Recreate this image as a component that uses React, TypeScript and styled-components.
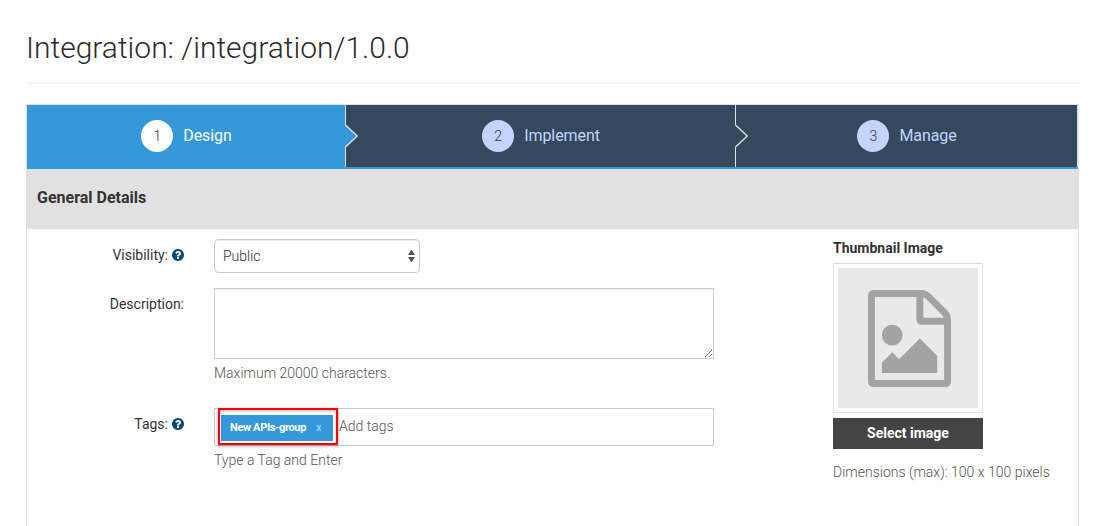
import React from 'react';
import styled, { createGlobalStyle } from 'styled-components';

const GlobalStyle = createGlobalStyle`
  *, *::before, *::after { box-sizing: border-box; }
  body {
    margin: 0;
    background: #fff;
    color: #333;
    font: 300 14px/20px Roboto, "Liberation Sans", sans-serif;
  }
`;

const Page = styled.main`
  height: 526px;
  padding: 0 17px 0 26px;
  display: flex;
  flex-direction: column;
  overflow: hidden;
`;

const Title = styled.h1`
  margin: 0 0 20px;
  height: 84px;
  padding-top: 28px;
  border-bottom: 1px solid #ececec;
  color: #2b2b2b;
  font-size: 30px;
  line-height: 40px;
  font-weight: 300;
  white-space: nowrap;
`;

const Panel = styled.section`
  flex: 1;
  border: 1px solid #e1e1e1;
  border-bottom: 0;
`;

const Steps = styled.nav`
  display: grid;
  grid-template-columns: 319px 390px 342px;
  height: 64px;
`;

const Step = styled.div<{ $active?: boolean }>`
  position: relative;
  display: flex;
  align-items: center;
  justify-content: center;
  gap: 10px;
  padding-bottom: 1px;
  background: ${(p) => (p.$active ? '#3498db' : '#34495e')};
  border-bottom: 2px solid #3498db;
  box-shadow: inset -1px 0 #e1e1e1;
  color: ${(p) => (p.$active ? '#fff' : '#c2d4ff')};
  font-size: 16px;
  font-weight: 400;
  letter-spacing: -0.08px;
`;

const StepNumber = styled.span<{ $active?: boolean }>`
  width: 32px;
  height: 32px;
  border-radius: 50%;
  background: ${(p) => (p.$active ? '#fff' : '#c2d4ff')};
  color: #333;
  font-size: 14px;
  font-weight: 300;
  line-height: 32px;
  text-align: center;
`;

const StepArrow = styled.svg`
  position: absolute;
  z-index: 1;
  top: 18px;
  right: -13px;
  width: 14px;
  height: 26px;
`;

const SectionHeader = styled.h2`
  margin: 0;
  height: 60px;
  padding: 19px 10px;
  background: #e1e1e1;
  font-size: 16px;
  line-height: 20px;
  font-weight: 700;
`;

const Content = styled.div`
  display: flex;
  padding: 10px 0 0 10px;
`;

const Form = styled.div`
  width: 677px;
  margin-right: 119px;
`;

const Field = styled.div<{ $gap?: number }>`
  display: grid;
  grid-template-columns: 147px 500px;
  column-gap: 30px;
  margin-bottom: ${(p) => p.$gap ?? 0}px;
`;

const Label = styled.label`
  display: flex;
  align-items: center;
  justify-content: flex-end;
  gap: 3px;
  height: 20px;
  margin-top: 6px;
  font-weight: 400;
`;

const Help = styled.svg`
  width: 14px;
  height: 14px;
  margin-right: -1px;
  fill: #044a75;
`;

const Select = styled.div`
  display: flex;
  align-items: center;
  justify-content: space-between;
  width: 206px;
  height: 34px;
  padding: 0 4px 0 8px;
  border: 1px solid #ccc;
  border-radius: 4px;
  color: #333;
  box-shadow: inset 0 1px 1px rgba(0, 0, 0, 0.075);
`;

const Arrows = styled.svg`
  width: 7px;
  height: 14px;
  fill: #555;
`;

const TextArea = styled.textarea`
  display: block;
  width: 500px;
  height: 71px;
  border: 1px solid #ccc;
  border-radius: 0;
  background: #fff;
  box-shadow: inset 0 1px 1px rgba(0, 0, 0, 0.075);
  resize: vertical;
  outline: 0;
`;

const Hint = styled.p`
  margin: 4px 0 0;
  color: #555;
`;

const TagInput = styled.div`
  display: flex;
  align-items: center;
  height: 38px;
  padding-left: 3px;
  border: 1px solid #ccc;
  color: #555;
`;

const TagFrame = styled.div`
  flex: none;
  width: 120px;
  height: 37px;
  margin: -1px 1px 0 0;
  align-self: flex-start;
  padding: 5px 3px 0 1px;
  border: 2px solid #f00;
  box-shadow: 0 1px 3px rgba(0, 0, 0, 0.4), inset 0 1px 3px rgba(0, 0, 0, 0.3);
`;

const TagHint = styled.span`
  margin-top: -2px;
`;

const Tag = styled.span`
  display: flex;
  gap: 10px;
  height: 26px;
  padding: 0 10px 0 9px;
  background: #3498db;
  color: #fff;
  font-size: 11px;
  line-height: 25px;
  font-weight: 700;
  letter-spacing: -0.35px;
  white-space: nowrap;
`;

const Remove = styled.span`
  color: #a5d1ef;
  font-weight: 500;
`;

const Aside = styled.aside`
  width: 230px;
  margin-top: -1px;
`;

const AsideTitle = styled.h3`
  margin: 0 0 5px;
  font-size: 14px;
  line-height: 20px;
  font-weight: 700;
`;

const Thumbnail = styled.div`
  width: 150px;
  height: 150px;
  padding: 4px;
  border: 1px solid #ddd;
`;

const Placeholder = styled.div`
  display: flex;
  align-items: center;
  justify-content: center;
  height: 100%;
  padding-left: 3px;
  background: #e9e9e9;
`;

const FileIcon = styled.svg`
  width: 83px;
  height: 97px;
  fill: #a3a3a3;
`;

const Button = styled.button`
  display: block;
  width: 150px;
  height: 31px;
  margin: 5px 0 13px;
  padding: 0;
  border: 0;
  background: #444;
  color: #fff;
  font: 700 14px/31px Roboto, sans-serif;
`;

const AsideHint = styled.p`
  margin: 0;
  color: #555;
  white-space: nowrap;
`;

const HelpIcon = () => (
  <Help viewBox="0 0 1792 1792">
    <path d="M1024 1376v-192q0-14-9-23t-23-9h-192q-14 0-23 9t-9 23v192q0 14 9 23t23 9h192q14 0 23-9t9-23zm256-672q0-88-55.500-163t-138.500-116-170-41q-243 0-371 213-15 24 8 42l132 100q7 6 19 6 16 0 25-12 53-68 86-92 34-24 86-24 48 0 85.500 26t37.500 59q0 38-20 61t-68 45q-63 28-115.500 86.500t-52.500 125.500v36q0 14 9 23t23 9h192q14 0 23-9t9-23q0-19 21.500-49.500t54.500-49.500q32-18 49-28.500t46-35 44.500-48 28-60.500 12.500-81zm384 192q0 209-103 385.500t-279.500 279.500-385.500 103-385.500-103-279.500-279.500-103-385.500 103-385.500 279.500-279.500 385.500-103 385.500 103 279.500 279.500 103 385.500z" />
  </Help>
);

const steps = ['Design', 'Implement', 'Manage'];

export default function App() {
  return (
    <Page>
      <GlobalStyle />
      <Title>Integration: /integration/1.0.0</Title>
      <Panel>
        <Steps>
          {steps.map((name, i) => (
            <Step key={name} $active={i === 0}>
              <StepNumber $active={i === 0}>{i + 1}</StepNumber>
              {name}
              {i < 2 && (
                <StepArrow viewBox="0 0 14 26">
                  <path d="M-1 1.500H.5L12.500 13 .5 24.500H-1z" fill={i === 0 ? '#3498db' : '#34495e'} />
                  <path d="M0 1.500L12.300 13 0 24.500" fill="none" stroke="#e1e1e1" strokeWidth="1.300" />
                </StepArrow>
              )}
            </Step>
          ))}
        </Steps>
        <SectionHeader>General Details</SectionHeader>
        <Content>
          <Form>
            <Field $gap={15}>
              <Label>Visibility: <HelpIcon /></Label>
              <Select>
                Public
                <Arrows viewBox="0 0 7 14">
                  <path d="M3.500 .5L7 6H0zM3.500 13.500L7 8H0z" />
                </Arrows>
              </Select>
            </Field>
            <Field $gap={25}>
              <Label>Description:</Label>
              <div>
                <TextArea />
                <Hint>Maximum 20000 characters.</Hint>
              </div>
            </Field>
            <Field>
              <Label>Tags: <HelpIcon /></Label>
              <div>
                <TagInput>
                  <TagFrame>
                    <Tag>New APIs-group <Remove>x</Remove></Tag>
                  </TagFrame>
                  <TagHint>Add tags</TagHint>
                </TagInput>
                <Hint>Type a Tag and Enter</Hint>
              </div>
            </Field>
          </Form>
          <Aside>
            <AsideTitle>Thumbnail Image</AsideTitle>
            <Thumbnail>
              <Placeholder>
                <FileIcon viewBox="0 0 1536 1792">
                  <path d="M1468 380q28 28 48 76t20 88v1152q0 40-28 68t-68 28h-1344q-40 0-68-28t-28-68v-1600q0-40 28-68t68-28h896q40 0 88 20t76 48zm-444-244v376h376q-10-29-22-41l-313-313q-12-12-41-22zm384 1528v-1024h-416q-40 0-68-28t-28-68v-416h-768v1536h1280zm-128-448v320h-1024v-192l192-192 128 128 384-384zm-832-192q-80 0-136-56t-56-136 56-136 136-56 136 56 56 136-56 136-136 56z" />
                </FileIcon>
              </Placeholder>
            </Thumbnail>
            <Button>Select image</Button>
            <AsideHint>Dimensions (max): 100 x 100 pixels</AsideHint>
          </Aside>
        </Content>
      </Panel>
    </Page>
  );
}
